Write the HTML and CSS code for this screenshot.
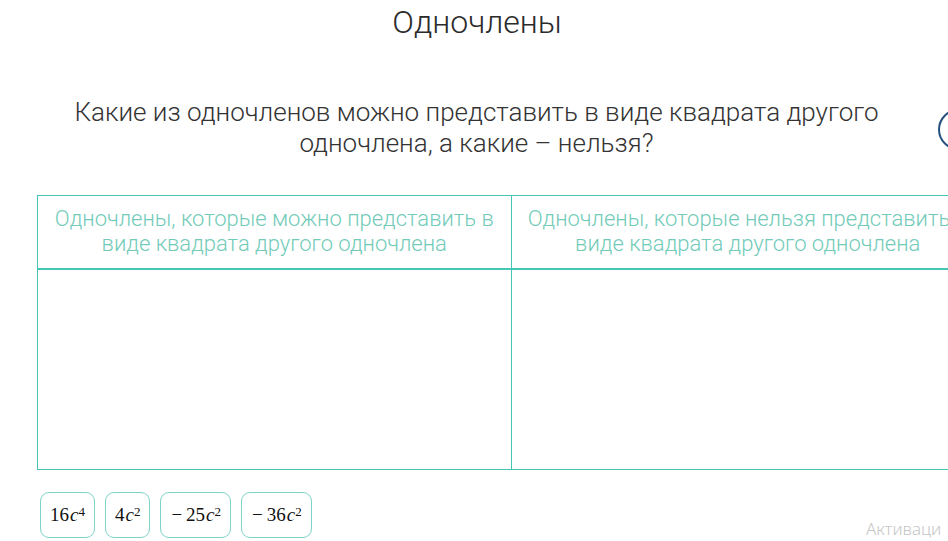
FILE: index.html
```html
<!DOCTYPE html>
<html lang="ru">
<head>
  <meta charset="UTF-8">
  <meta name="viewport" content="width=device-width, initial-scale=1.0">
  <title>Одночлены</title>
  <link rel="stylesheet" href="styles.css">
</head>
<body>
  <div class="page">
    <h1 class="title">Одночлены</h1>

    <div class="question">
      <p>Какие из одночленов можно представить в виде квадрата другого одночлена, а какие – нельзя?</p>
      <span class="round-btn"></span>
    </div>

    <!-- drop zones -->
    <table class="sort-table">
      <thead>
        <tr>
          <th>Одночлены, которые можно представить в виде квадрата другого одночлена</th>
          <th>Одночлены, которые нельзя представить в виде квадрата другого одночлена</th>
        </tr>
      </thead>
      <tbody>
        <tr>
          <td></td>
          <td></td>
        </tr>
      </tbody>
    </table>

    <div class="chips">
      <span class="chip">16<i>c</i><sup>4</sup></span>
      <span class="chip">4<i>c</i><sup>2</sup></span>
      <span class="chip"><span class="minus">−</span>25<i>c</i><sup>2</sup></span>
      <span class="chip"><span class="minus">−</span>36<i>c</i><sup>2</sup></span>
    </div>
  </div>

  <div class="watermark">Активаци</div>
</body>
</html>
```

FILE: styles.css
```css
html, body {
  margin: 0;
  overflow: hidden;
}

body {
  font-family: Roboto, "Noto Sans", sans-serif;
  font-weight: 300;
  color: #333;
  background: #fff;
  width: 948px;
  height: 541px;
  position: relative;
}

.page {
  width: 948px;
}

.title {
  margin: 0;
  padding: 3px 0 0 6px;
  font-size: 32px;
  font-weight: 300;
  line-height: 38px;
  text-align: center;
  color: #2b2b2b;
}

.question {
  position: relative;
  margin-top: 56px;
  padding: 0 48px 0 53px;
}

.question p {
  margin: 0;
  font-size: 26px;
  line-height: 31px;
  text-align: center;
  color: #333;
}

.round-btn {
  position: absolute;
  left: 938px;
  top: 12px;
  width: 37px;
  height: 37px;
  border: 2px solid #24507f;
  border-radius: 50%;
}

.sort-table {
  margin-top: 36px;
  margin-left: 37px;
  width: 948px;
  border: 1px solid #45c5b6;
  border-collapse: collapse;
  table-layout: fixed;
}

.sort-table tbody, .sort-table thead, .sort-table tr {
  border-color: #45c5b6;
}

.sort-table th, .sort-table td {
  border: 1px solid #45c5b6;
  width: 50%;
}

.sort-table th {
  height: 69px;
  padding: 0 10px 3px;
  font-size: 22px;
  font-weight: 300;
  line-height: 25px;
  color: #72cbb9;
  border-bottom-width: 2px;
}

.sort-table td {
  height: 197px;
}

.chips {
  display: flex;
  gap: 10px;
  margin-top: 22px;
  margin-left: 40px;
}

.chip {
  display: flex;
  align-items: center;
  height: 44px;
  padding: 0 9px;
  border: 1px solid #7ed3c8;
  border-radius: 9px;
  font-family: "Liberation Serif", "DejaVu Serif", serif;
  font-size: 19px;
  color: #111;
}

.chip .minus {
  margin: 0 4px 0 1px;
}

.chip i {
  font-style: italic;
  margin-left: 1px;
}

.chip sup {
  font-size: 13px;
  position: relative;
  top: -3px;
}

.watermark {
  position: absolute;
  left: 866px;
  top: 517px;
  font-family: "Noto Sans", sans-serif;
  font-size: 17px;
  color: #c6c6c6;
  white-space: nowrap;
}
```
